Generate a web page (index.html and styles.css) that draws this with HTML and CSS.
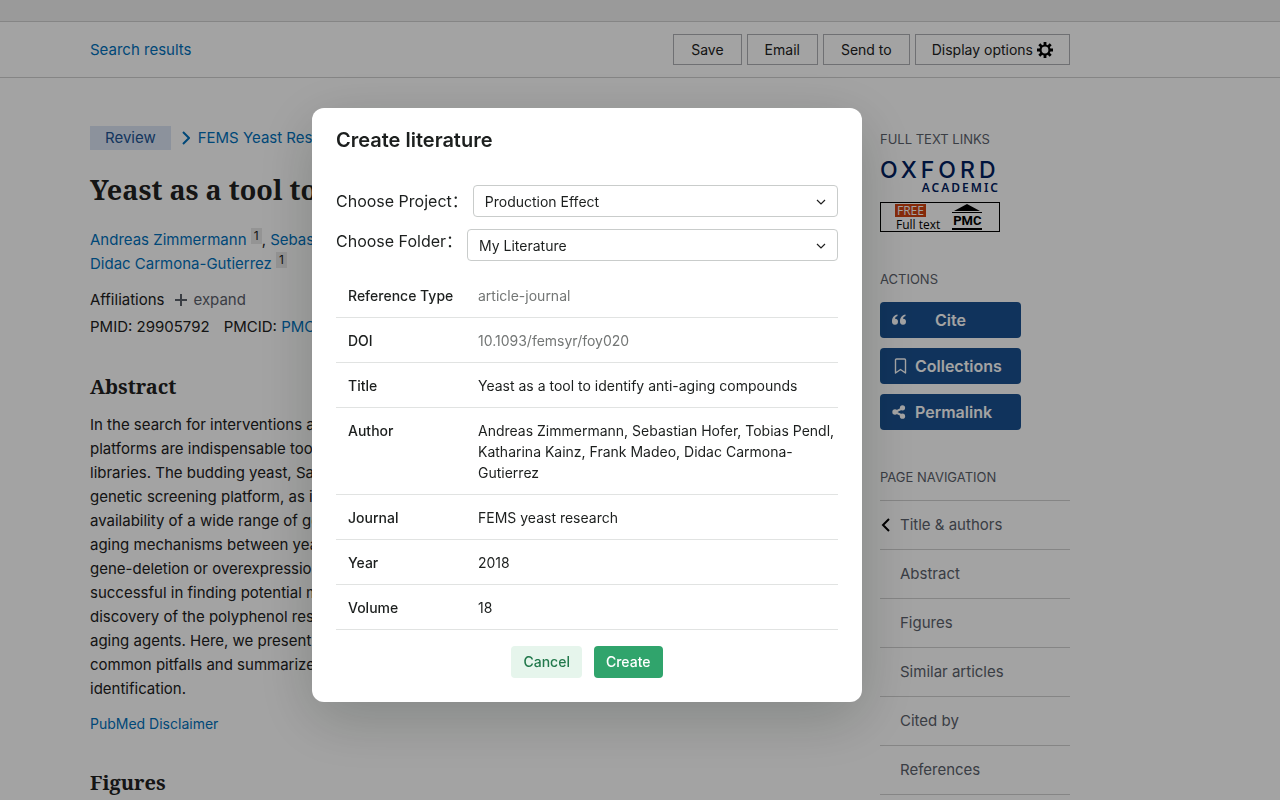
FILE: index.html
```html
<!DOCTYPE html>
<html lang="en">
<head>
<meta charset="utf-8">
<title>Yeast as a tool to identify anti-aging compounds</title>
<link rel="stylesheet" href="styles.css">
</head>
<body>
<div class="page">
  <div class="top-strip"></div>
  <header class="toolbar">
    <div class="toolbar-inner">
      <a class="link" href="#">Search results</a>
      <div class="toolbar-actions">
        <button class="tool-btn" type="button">Save</button>
        <button class="tool-btn" type="button">Email</button>
        <button class="tool-btn" type="button">Send to</button>
        <button class="tool-btn tool-btn-wide" type="button">Display options
          <svg width="16" height="16" viewBox="0 0 16 16" aria-hidden="true"><g fill="none" stroke="#000"><circle cx="8" cy="8" r="4.500" stroke-width="2.200"/><path stroke-width="2.800" d="M8 0v3M8 13v3M0 8h3M13 8h3M2.300 2.300l2.200 2.200M11.500 11.500l2.200 2.200M2.300 13.700l2.200-2.200M11.500 4.500l2.200-2.200"/></g></svg>
        </button>
      </div>
    </div>
  </header>

  <div class="columns">
    <main class="article">
      <div class="source">
        <span class="tag">Review</span>
        <svg width="8" height="14" viewBox="0 0 8 14" aria-hidden="true"><path d="M1 1l6 6-6 6" fill="none" stroke="#0071bc" stroke-width="2"/></svg>
        <a class="link" href="#">FEMS Yeast Res</a>
      </div>
      <h1 class="title">Yeast as a tool to identify anti-aging compounds</h1>
      <p class="authors"><a class="link" href="#">Andreas Zimmermann</a> <sup class="affil">1</sup>, <a class="link" href="#">Sebastian Hofer</a> <sup class="affil">1</sup>, <a class="link" href="#">Tobias Pendl</a> <sup class="affil">1</sup>,<br><a class="link" href="#">Didac Carmona-Gutierrez</a> <sup class="affil">1</sup></p>
      <div class="affiliations">Affiliations
        <button class="expand" type="button"><svg width="12" height="12" viewBox="0 0 12 12" aria-hidden="true"><path d="M6 0v12M0 6h12" stroke="#5b616b" stroke-width="2"/></svg>expand</button>
      </div>
      <div class="ids"><span>PMID: 29905792</span><span>PMCID: <a class="link" href="#">PMC6001894</a></span></div>
      <h2 class="heading">Abstract</h2>
      <p class="abstract">In the search for interventions against aging and age-related diseases, biological screening<br>
      platforms are indispensable tools to identify anti-aging compounds among large substance<br>
      libraries. The budding yeast, Saccharomyces cerevisiae, has emerged as a powerful<br>
      genetic screening platform, as it combines a rapid workflow with amenability and the<br>
      availability of a wide range of genetic mutant libraries. Given the amount of conserved<br>
      aging mechanisms between yeast and human, testing candidate substances in yeast<br>
      gene-deletion or overexpression collections, or de novo derived mutants, has proven<br>
      successful in finding potential molecular targets. Yeast-based studies have led to the<br>
      discovery of the polyphenol resveratrol and the natural polyamine spermidine as anti-<br>
      aging agents. Here, we present strategies for anti-aging screens in yeast, discuss<br>
      common pitfalls and summarize studies that have used yeast for drug discovery and target<br>
      identification.</p>
      <a class="link disclaimer" href="#">PubMed Disclaimer</a>
      <h2 class="heading figures">Figures</h2>
    </main>

    <aside class="sidebar">
      <h3 class="side-heading">FULL TEXT LINKS</h3>
      <a class="oxford" href="#"><span class="oxford-name">OXFORD</span><span class="oxford-sub">ACADEMIC</span></a>
      <a class="pmc" href="#">
        <span class="pmc-text"><span class="pmc-free">FREE</span><span class="pmc-full">Full text</span></span>
        <span class="pmc-logo">
          <svg width="30" height="10" viewBox="0 0 30 10" aria-hidden="true"><path d="M15 0L28 7H2zM0 8h30v1H0z"/></svg>
          <span class="pmc-name">PMC</span>
        </span>
      </a>
      <h3 class="side-heading actions-heading">ACTIONS</h3>
      <div class="actions">
        <button class="action" type="button"><svg width="16" height="16" viewBox="0 0 16 16" aria-hidden="true"><path fill="#fff" d="M6.500 2.500C3 3 1 5.500 1 9.500a3 3 0 1 0 3-2.800c.2-1.300 1-2.200 2.500-2.700zM14.500 2.500C11 3 9 5.500 9 9.500a3 3 0 1 0 3-2.800c.2-1.300 1-2.200 2.500-2.700z"/></svg><span class="cite-label">Cite</span></button>
        <button class="action" type="button"><svg width="16" height="16" viewBox="0 0 16 16" aria-hidden="true"><path fill="none" stroke="#fff" stroke-width="1.400" stroke-linejoin="round" d="M5.500 1h8a1 1 0 0 1 1 1v13L9.500 11.500 4.500 15V2a1 1 0 0 1 1-1z"/></svg><span>Collections</span></button>
        <button class="action" type="button"><svg width="16" height="16" viewBox="0 0 16 16" aria-hidden="true"><path d="M12 4L4 8l8 4" fill="none" stroke="#fff" stroke-width="2"/><g fill="#fff"><circle cx="11.500" cy="3.800" r="2.600"/><circle cx="4" cy="8" r="2.700"/><circle cx="11.500" cy="12.200" r="2.600"/></g></svg><span>Permalink</span></button>
      </div>
      <h3 class="side-heading nav-heading">PAGE NAVIGATION</h3>
      <nav class="page-nav">
        <a class="nav-link" href="#"><svg class="nav-arrow" width="9" height="14" viewBox="0 0 9 14" aria-hidden="true"><path d="M8 1L2 7l6 6" fill="none" stroke="#000" stroke-width="2"/></svg>Title &amp; authors</a>
        <a class="nav-link" href="#">Abstract</a>
        <a class="nav-link" href="#">Figures</a>
        <a class="nav-link" href="#">Similar articles</a>
        <a class="nav-link" href="#">Cited by</a>
        <a class="nav-link" href="#">References</a>
      </nav>
    </aside>
  </div>
</div>

<div class="overlay">
  <form class="modal" role="dialog" aria-labelledby="modal-title">
    <h2 class="modal-title" id="modal-title">Create literature</h2>
    <div class="field">
      <label for="project">Choose Project：</label>
      <div class="select-box">
        <select class="select" id="project"><option>Production Effect</option></select>
        <svg class="chevron" width="10" height="6" viewBox="0 0 10 6" aria-hidden="true"><path d="M1 1l4 4 4-4" fill="none" stroke="#202020" stroke-width="1.200"/></svg>
      </div>
    </div>
    <div class="field field-top">
      <label for="folder">Choose Folder：</label>
      <div class="select-box">
        <select class="select" id="folder"><option>My Literature</option></select>
        <svg class="chevron" width="10" height="6" viewBox="0 0 10 6" aria-hidden="true"><path d="M1 1l4 4 4-4" fill="none" stroke="#202020" stroke-width="1.200"/></svg>
      </div>
    </div>
    <table class="details">
      <tr><th scope="row">Reference Type</th><td class="muted">article-journal</td></tr>
      <tr><th scope="row">DOI</th><td class="muted">10.1093/femsyr/foy020</td></tr>
      <tr><th scope="row">Title</th><td>Yeast as a tool to identify anti-aging compounds</td></tr>
      <tr><th scope="row">Author</th><td>Andreas Zimmermann, Sebastian Hofer, Tobias Pendl, Katharina Kainz, Frank Madeo, Didac Carmona-<br>Gutierrez</td></tr>
      <tr><th scope="row">Journal</th><td>FEMS yeast research</td></tr>
      <tr><th scope="row">Year</th><td>2018</td></tr>
      <tr><th scope="row">Volume</th><td>18</td></tr>
    </table>
    <div class="modal-actions">
      <button class="btn btn-cancel" type="button">Cancel</button>
      <button class="btn btn-create" type="button">Create</button>
    </div>
  </form>
</div>
</body>
</html>
```
FILE: styles.css
```css
* { box-sizing: border-box; }

body {
  margin: 0;
  height: 100vh;
  overflow: hidden;
  background: #fff;
  color: #212121;
  font: 15px/24px Inter, "Noto Sans CJK SC", sans-serif;
}

h1, h2, h3, p { margin: 0; }
button { font: inherit; cursor: pointer; }
svg { flex: none; }
.link { color: #0071bc; text-decoration: none; }

/* Article page */
.top-strip { height: 22px; background: #f1f1f1; border-bottom: 1px solid #d0d0d0; }
.toolbar { border-bottom: 1px solid #d0d0d0; }
.toolbar-inner {
  display: flex;
  align-items: center;
  justify-content: space-between;
  max-width: 1070px;
  height: 55px;
  padding-left: 90px;
}
.toolbar-actions { display: flex; gap: 5px; }
.tool-btn {
  display: flex;
  align-items: center;
  gap: 4px;
  height: 31px;
  padding: 0 17px;
  border: 1px solid #aeb0b5;
  background: none;
  color: #212121;
  font-size: 14px;
}
.tool-btn-wide { padding: 0 16px; }

.columns {
  display: grid;
  grid-template-columns: minmax(0, 1fr) 190px;
  gap: 60px;
  max-width: 1070px;
  padding: 48px 0 0 90px;
}
.source { display: flex; align-items: center; height: 24px; gap: 8px; }
.tag { padding: 0 15px; margin-right: 3px; background: #dce4f5; color: #205493; }
.title {
  margin-top: 20px;
  font: bold 27px/40px "Noto Serif", "Droid Serif", "DejaVu Serif Condensed", "DejaVu Serif", serif;
  white-space: nowrap;
}
.authors { margin-top: 18px; line-height: 24px; }
.affil {
  display: inline-block;
  padding: 0 3px;
  background: #e8e8e8;
  font-size: 12px;
  line-height: 16px;
  vertical-align: 5px;
}
.affiliations { display: flex; gap: 10px; margin-top: 12px; }
.expand {
  display: flex;
  align-items: center;
  gap: 7px;
  padding: 0;
  border: 0;
  background: none;
  color: #5b616b;
}
.ids { display: flex; gap: 14px; margin-top: 3px; }
.heading {
  margin-top: 32px;
  font: bold 20px/32px "Noto Serif", "Droid Serif", "DejaVu Serif Condensed", "DejaVu Serif", serif;
}
.abstract { margin-top: 10px; white-space: nowrap; }
.disclaimer { display: block; margin-top: 11px; font-size: 14px; }
.figures { margin-top: 31px; }

/* Sidebar */
.side-heading { margin-top: 1px; font-size: 13px; font-weight: 400; color: #5b616b; }
.oxford {
  display: flex;
  flex-direction: column;
  width: 120px;
  margin-top: 8px;
  color: #002060;
  text-decoration: none;
  white-space: nowrap;
}
.oxford-name { font: 500 23px/22px Inter, sans-serif; letter-spacing: 4px; }
.oxford-sub { align-self: flex-end; font: 600 12px/14px "Noto Sans", sans-serif; letter-spacing: 2px; }
.pmc {
  display: flex;
  gap: 11px;
  width: 120px;
  height: 30px;
  margin-top: 7px;
  padding: 1px 0 0 14px;
  border: 1px solid #000;
  color: #000;
  font: 12px/13px "Open Sans", sans-serif;
  text-decoration: none;
}
.pmc-text { display: flex; flex-direction: column; align-items: flex-start; }
.pmc-free { padding: 0 2px; background: #d14311; color: #fff; }
.pmc-full { padding: 1px 1px 0; white-space: nowrap; }
.pmc-logo { display: flex; flex-direction: column; }
.pmc-name { border-bottom: 2px solid #000; text-align: center; font: bold 13px/14px Roboto, sans-serif; }
.actions-heading { margin-top: 35px; }
.actions { display: grid; gap: 10px; width: 141px; margin-top: 11px; }
.action {
  display: flex;
  align-items: center;
  gap: 8px;
  height: 36px;
  padding: 0 11px;
  border: 0;
  border-radius: 4px;
  background: #1a5190;
  color: #fff;
  font-size: 16px;
  font-weight: 600;
}
.cite-label { flex: 1; padding-right: 24px; text-align: center; }
.nav-heading { margin-top: 35px; }
.page-nav { margin-top: 11px; border-top: 1px solid #d0d0d0; }
.nav-link {
  position: relative;
  display: block;
  padding: 12px 20px;
  border-bottom: 1px solid #d0d0d0;
  color: #5b616b;
  text-decoration: none;
}
.nav-arrow { position: absolute; left: 1px; top: 17px; }

/* Dialog */
.overlay {
  position: fixed;
  inset: 0;
  display: flex;
  align-items: flex-start;
  justify-content: center;
  padding: 108px 106px 0 0;
  background: rgba(0, 0, 0, .36);
}
.modal {
  width: 550px;
  padding: 20px 24px 24px;
  border-radius: 12px;
  background: #fff;
  color: #1c1f1e;
  box-shadow: 0 16px 60px rgba(0, 20, 10, .2);
}
.modal-title { margin-bottom: 33px; font-size: 20px; line-height: 24px; font-weight: 600; }
.field { display: flex; align-items: center; gap: 5px; margin-bottom: 12px; }
.field-top { align-items: flex-start; }
.field label { font-size: 16px; white-space: nowrap; }
.select-box { position: relative; flex: 1; }
.select {
  display: block;
  width: 100%;
  height: 32px;
  padding: 0 11px;
  border: 1px solid #c9cccb;
  border-radius: 4px;
  appearance: none;
  background: #fff;
  color: #1c1f1e;
  font: 14px/21px Inter, sans-serif;
}
.chevron { position: absolute; right: 12px; top: 14px; }
.details {
  width: 100%;
  border-collapse: separate;
  border-spacing: 0;
  table-layout: fixed;
  font-size: 14px;
  line-height: 21px;
}
.details th, .details td {
  padding: 12px 2px 11px 12px;
  border-bottom: 1px solid #e1e3e2;
  text-align: left;
  vertical-align: top;
}
.details th { width: 130px; padding-right: 0; font-weight: 500; }
.details .muted { color: #737675; }
.modal-actions { display: flex; justify-content: center; gap: 12px; margin-top: 16px; }
.btn {
  height: 32px;
  padding: 0 12px;
  border: 0;
  border-radius: 4px;
  font-size: 14px;
  font-weight: 500;
}
.btn-cancel { background: #e6f5ec; color: #22794c; }
.btn-create { background: #30a46c; color: #fff; }
```
